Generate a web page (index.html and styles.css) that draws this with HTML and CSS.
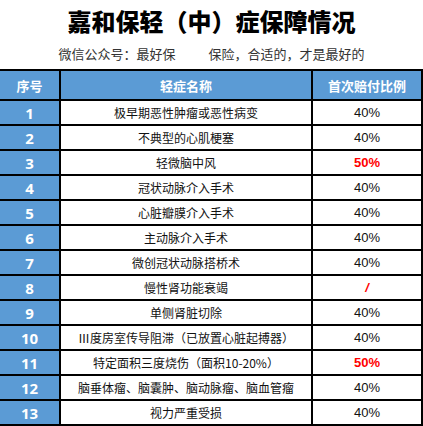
FILE: index.html
```html
<!DOCTYPE html>
<html lang="zh">
<head>
<meta charset="utf-8">
<link rel="stylesheet" href="styles.css">
</head>
<body>
<h1 class="title">嘉和保轻（中）症保障情况</h1>
<p class="subtitle"><span>微信公众号：最好保</span><span class="gap"></span><span>保险，合适的，才是最好的</span></p>
<table class="grid">
  <thead>
    <tr><th class="c-no">序号</th><th class="c-name">轻症名称</th><th class="c-rate">首次赔付比例</th></tr>
  </thead>
  <tbody>
    <tr><td class="no">1</td><td>极早期恶性肿瘤或恶性病变</td><td class="num">40%</td></tr>
    <tr><td class="no">2</td><td>不典型的心肌梗塞</td><td class="num">40%</td></tr>
    <tr><td class="no">3</td><td>轻微脑中风</td><td class="num red">50%</td></tr>
    <tr><td class="no">4</td><td>冠状动脉介入手术</td><td class="num">40%</td></tr>
    <tr><td class="no">5</td><td>心脏瓣膜介入手术</td><td class="num">40%</td></tr>
    <tr><td class="no">6</td><td>主动脉介入手术</td><td class="num">40%</td></tr>
    <tr><td class="no">7</td><td>微创冠状动脉搭桥术</td><td class="num">40%</td></tr>
    <tr><td class="no">8</td><td>慢性肾功能衰竭</td><td class="num red slash">/</td></tr>
    <tr><td class="no">9</td><td>单侧肾脏切除</td><td class="num">40%</td></tr>
    <tr><td class="no">10</td><td>Ⅲ度房室传导阻滞（已放置心脏起搏器）</td><td class="num">40%</td></tr>
    <tr><td class="no">11</td><td>特定面积三度烧伤（面积10-20%）</td><td class="num red">50%</td></tr>
    <tr><td class="no">12</td><td>脑垂体瘤、脑囊肿、脑动脉瘤、脑血管瘤</td><td class="num">40%</td></tr>
    <tr><td class="no">13</td><td>视力严重受损</td><td class="num">40%</td></tr>
  </tbody>
</table>
</body>
</html>
```
FILE: styles.css
```css
html, body {
  margin: 0;
  padding: 0;
  background: #fff;
}
body {
  width: 423px;
  font-family: "Noto Sans CJK SC", "Noto Sans", sans-serif;
  color: #111;
}
.title {
  margin: 0;
  padding-top: 6px;
  height: 30px;
  line-height: 30px;
  font-size: 24px;
  font-weight: 900;
  text-align: center;
  color: #000;
}
.subtitle {
  margin: 8px 0 0;
  height: 20px;
  line-height: 20px;
  font-size: 13px;
  text-align: center;
  color: #333;
}
.gap {
  display: inline-block;
  width: 33px;
}
.grid {
  margin-top: 5px;
  width: 423px;
  table-layout: fixed;
  border-collapse: separate;
  border-spacing: 0;
  border-top: 2px solid #000;
}
.grid th, .grid td {
  box-sizing: border-box;
  padding: 0;
  text-align: center;
  border-right: 2px solid #000;
  border-bottom: 2px solid #000;
  white-space: nowrap;
}
.grid th {
  height: 30px;
  background: #5b9bd5;
  color: #fff;
  font-size: 13px;
  font-weight: 700;
}
.c-no { width: 61px; }
.c-name { width: 252px; }
.c-rate { width: 110px; }
.grid td {
  height: 25px;
  font-size: 12px;
  color: #111;
}
.grid td.no {
  background: #5b9bd5;
  color: #fff;
  font-family: "Noto Sans", "Liberation Sans", sans-serif;
  font-size: 15px;
  font-weight: 700;
}
.grid td.num {
  font-family: "Liberation Sans", sans-serif;
  font-size: 13px;
}
.grid td.red {
  color: #ff0000;
  font-weight: 700;
}
.grid td.slash {
  font-style: italic;
}
```
